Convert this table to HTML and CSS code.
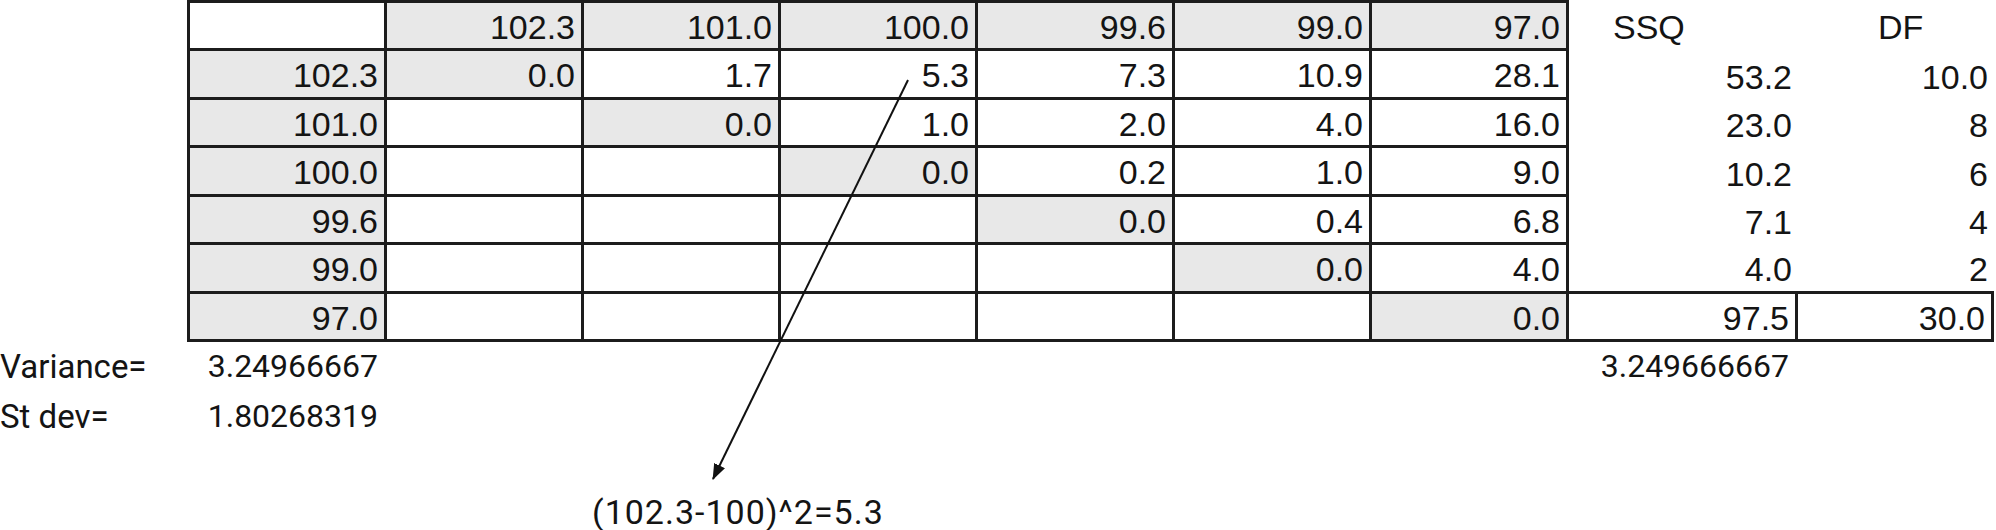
FILE: index.html
```html
<!DOCTYPE html>
<html lang="en">
<head>
    <meta charset="UTF-8">
    <meta name="viewport" content="width=device-width, initial-scale=1.0">
    <title>Pairwise squared differences</title>
    <link rel="stylesheet" href="styles.css">
</head>
<body>
    <div class="sheet">
        <table class="grid">
            <colgroup>
                <col class="c-label">
                <col class="c-head">
                <col span="6" class="c-val">
                <col class="c-ssq">
                <col class="c-df">
            </colgroup>
            <tbody>
                <tr class="row-top">
                    <td></td>
                    <td class="box lead"></td>
                    <td class="box shade">102.3</td>
                    <td class="box shade">101.0</td>
                    <td class="box shade">100.0</td>
                    <td class="box shade">99.6</td>
                    <td class="box shade">99.0</td>
                    <td class="box shade">97.0</td>
                    <td class="hdr ssq-h">SSQ</td>
                    <td class="hdr df-h">DF</td>
                </tr>
                <tr class="row-data">
                    <td></td>
                    <td class="box lead shade">102.3</td>
                    <td class="box shade">0.0</td>
                    <td class="box">1.7</td>
                    <td class="box">5.3</td>
                    <td class="box">7.3</td>
                    <td class="box">10.9</td>
                    <td class="box">28.1</td>
                    <td class="num">53.2</td>
                    <td class="num">10.0</td>
                </tr>
                <tr class="row-data">
                    <td></td>
                    <td class="box lead shade">101.0</td>
                    <td class="box"></td>
                    <td class="box shade">0.0</td>
                    <td class="box">1.0</td>
                    <td class="box">2.0</td>
                    <td class="box">4.0</td>
                    <td class="box">16.0</td>
                    <td class="num">23.0</td>
                    <td class="num">8</td>
                </tr>
                <tr class="row-data">
                    <td></td>
                    <td class="box lead shade">100.0</td>
                    <td class="box"></td>
                    <td class="box"></td>
                    <td class="box shade">0.0</td>
                    <td class="box">0.2</td>
                    <td class="box">1.0</td>
                    <td class="box">9.0</td>
                    <td class="num">10.2</td>
                    <td class="num">6</td>
                </tr>
                <tr class="row-data">
                    <td></td>
                    <td class="box lead shade">99.6</td>
                    <td class="box"></td>
                    <td class="box"></td>
                    <td class="box"></td>
                    <td class="box shade">0.0</td>
                    <td class="box">0.4</td>
                    <td class="box">6.8</td>
                    <td class="num">7.1</td>
                    <td class="num">4</td>
                </tr>
                <tr class="row-data">
                    <td></td>
                    <td class="box lead shade">99.0</td>
                    <td class="box"></td>
                    <td class="box"></td>
                    <td class="box"></td>
                    <td class="box"></td>
                    <td class="box shade">0.0</td>
                    <td class="box">4.0</td>
                    <td class="num above-total">4.0</td>
                    <td class="num above-total">2</td>
                </tr>
                <tr class="row-data">
                    <td></td>
                    <td class="box lead shade">97.0</td>
                    <td class="box"></td>
                    <td class="box"></td>
                    <td class="box"></td>
                    <td class="box"></td>
                    <td class="box"></td>
                    <td class="box shade">0.0</td>
                    <td class="box">97.5</td>
                    <td class="box">30.0</td>
                </tr>
                <tr class="row-stat">
                    <td class="label">Variance=</td>
                    <td class="stat">3.24966667</td>
                    <td colspan="6"></td>
                    <td class="stat">3.249666667</td>
                    <td></td>
                </tr>
                <tr class="row-stat">
                    <td class="label">St dev=</td>
                    <td class="stat">1.80268319</td>
                    <td colspan="8"></td>
                </tr>
                <tr class="row-gap">
                    <td colspan="10"></td>
                </tr>
                <tr class="row-note">
                    <td colspan="3"></td>
                    <td class="note" colspan="7">(102.3-100)^2=5.3</td>
                </tr>
            </tbody>
        </table>

        <!-- callout from the 5.3 cell down to its formula -->
        <svg class="callout" width="1996" height="530" viewBox="0 0 1996 530">
            <defs>
                <marker id="head" markerUnits="userSpaceOnUse" markerWidth="16" markerHeight="12" refX="15" refY="6" orient="auto">
                    <path d="M0,0 L16,6 L0,12 z" fill="#111"></path>
                </marker>
            </defs>
            <line x1="908" y1="80" x2="713" y2="479" stroke="#111" stroke-width="2" marker-end="url(#head)"></line>
        </svg>
    </div>
</body>
</html>
```

FILE: styles.css
```css
* {
    margin: 0;
    padding: 0;
    box-sizing: border-box;
}

body {
    background: #ffffff;
    color: #141414;
    font-family: 'Liberation Sans', Arial, sans-serif;
    overflow: hidden;
}

.sheet {
    position: relative;
    width: 1996px;
    height: 530px;
    overflow: hidden;
}

.grid {
    border-collapse: separate;
    border-spacing: 0;
    table-layout: fixed;
    width: 1994px;
    font-size: 34px;
}

.c-label { width: 187px; }
.c-head { width: 200px; }
.c-val { width: 197px; }
.c-ssq { width: 229px; }
.c-df { width: 196px; }

.grid td {
    padding: 4px 6px 0 6px;
    text-align: right;
    white-space: nowrap;
    vertical-align: middle;
    line-height: 1.1;
}

.row-top { height: 51px; }
.row-data { height: 48.5px; }
.row-stat { height: 50px; }
.row-gap { height: 51px; }
.row-note { height: 37px; }

.box {
    border-right: 3px solid #1c1c1c;
    border-bottom: 3px solid #1c1c1c;
}

.row-top .box {
    border-top: 3px solid #1c1c1c;
}

.box.lead {
    border-left: 3px solid #1c1c1c;
}

.above-total {
    border-bottom: 3px solid #1c1c1c;
}

.shade {
    background: #e8e8e8;
}

.grid td.hdr {
    text-align: left;
}

.grid td.ssq-h { padding-left: 44px; }
.grid td.df-h { padding-left: 80px; }

.grid td.label,
.grid td.stat,
.grid td.note {
    font-family: Roboto, 'Noto Sans', sans-serif;
    font-size: 32px;
    padding-top: 0;
}

.grid td.label {
    text-align: left;
    padding-left: 0;
    font-size: 33px;
}

.grid td.stat {
    padding-right: 9px;
}

.grid td.note {
    text-align: left;
    padding-left: 8px;
    font-size: 34px;
    letter-spacing: 1px;
    line-height: 1;
}

.callout {
    position: absolute;
    top: 0;
    left: 0;
    pointer-events: none;
}
```
